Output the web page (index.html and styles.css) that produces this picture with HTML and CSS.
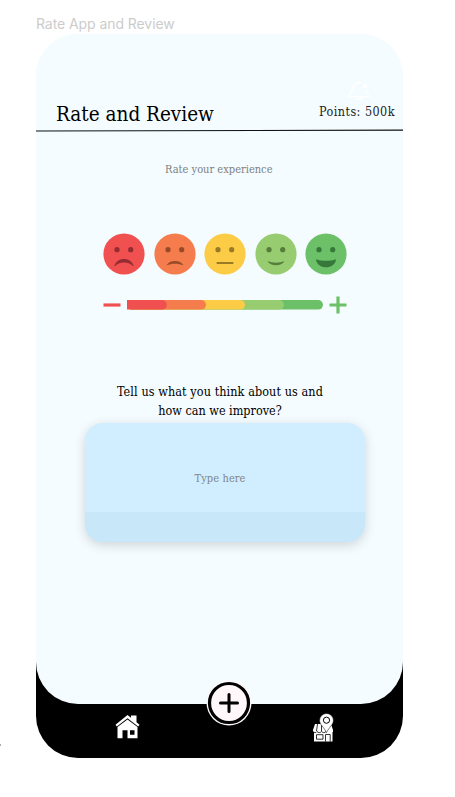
FILE: index.html
```html
<!DOCTYPE html>
<html lang="en">
<head>
<meta charset="utf-8">
<title>Rate App and Review</title>
<link rel="stylesheet" href="styles.css">
</head>
<body>
<div class="frame-label">Rate App and Review</div>
<main class="phone">
  <section class="screen">
    <header class="header">
      <h1 class="title"><span>Rate and Review</span></h1>
      <div class="account">
        <svg class="bell" viewBox="0 0 24 20" fill="none" stroke="#fff" stroke-width="1.300" stroke-linejoin="round" stroke-linecap="round"><path d="M14 2C9 1 6.200 4 5.300 8c-.6 3-1.300 5-3.800 7.700h21c-2-2-3-3.500-3.500-6M9 16c1 3.200 5.500 3.200 6.500 0"/><circle cx="18" cy="5" r="1.700" fill="#fff"/></svg>
        <span class="points">Points: 500k</span>
      </div>
    </header>
    <svg class="divider" viewBox="0 0 367 3"><path d="M0 2 367 1.200" stroke="#111" stroke-width="1.200"/></svg>
    <p class="prompt"><span>Rate your experience</span></p>
    <div class="faces">
      <svg viewBox="0 0 42 42"><circle cx="21" cy="21" r="20.600" fill="#f0504f"/><g fill="#942c32"><circle cx="14" cy="16.700" r="2.600"/><circle cx="27.700" cy="16.700" r="2.600"/><path d="M11.300 33.800C13 23.500 29 23.500 30.700 33.800 26 28 16 28 11.300 33.800Z"/></g></svg>
      <svg viewBox="0 0 42 42"><circle cx="21" cy="21" r="20.600" fill="#f57c4c"/><g fill="#984a28"><circle cx="14" cy="16.700" r="2.600"/><circle cx="27.700" cy="16.700" r="2.600"/><path d="M12.500 32.300C15.500 26.600 26.500 26.600 29.500 32.300 24 30.200 18 30.200 12.500 32.300Z"/></g></svg>
      <svg viewBox="0 0 42 42"><circle cx="21" cy="21" r="20.600" fill="#fdcc46"/><g fill="#9a7927"><circle cx="14" cy="16.700" r="2.600"/><circle cx="27.700" cy="16.700" r="2.600"/><rect x="12.500" y="29.100" width="17" height="1.900" rx=".8"/></g></svg>
      <svg viewBox="0 0 42 42"><circle cx="21" cy="21" r="20.600" fill="#97cc70"/><g fill="#557e3b"><circle cx="14" cy="16.700" r="2.600"/><circle cx="27.700" cy="16.700" r="2.600"/><path d="M12.500 28C18 30.200 24 30.200 29.500 28 26.500 33.800 15.500 33.800 12.500 28Z"/></g></svg>
      <svg viewBox="0 0 42 42"><circle cx="21" cy="21" r="20.600" fill="#6bc068"/><g fill="#35783a"><circle cx="14" cy="16.700" r="2.600"/><circle cx="27.700" cy="16.700" r="2.600"/><path d="M11 26.200C17 28.200 25 28.200 31 26.200 30 37 12 37 11 26.200Z"/></g></svg>
    </div>
    <div class="scale">
      <svg class="minus" viewBox="0 0 18 18"><path d="M.5 9h17" stroke="#f0504f" stroke-width="3.200"/></svg>
      <svg class="meter" viewBox="0 0 196 10"><rect width="196" height="9.600" rx="4.800" fill="#6bc068"/><rect width="157" height="9.600" rx="4.800" fill="#97cc70"/><rect width="118" height="9.600" rx="4.800" fill="#fdcc46"/><rect width="79" height="9.600" rx="4.800" fill="#f57c4c"/><path d="M0 0h35a4.800 4.800 0 0 1 0 9.600H0Z" fill="#f0504f"/></svg>
      <svg class="plus" viewBox="0 0 18 18"><path d="M.5 9h17M9 .5v17" stroke="#6bc068" stroke-width="3.200"/></svg>
    </div>
    <p class="question"><span class="q1">Tell us what you think about us and</span><br><span class="q2">how can we improve?</span></p>
    <div class="input"><span class="placeholder">Type here</span><div class="input-footer"></div></div>
  </section>
  <nav class="nav">
    <svg class="home" viewBox="0 0 25 24"><path fill="#fff" d="M12.500 0 16 2.800V.5h5.500v6.800l3 2.500-1.300 1.600L12.500 3.200 1.800 11.400.5 9.800Z"/><path fill="#fff" fill-rule="evenodd" d="M2.500 12 12.500 4.500 22.500 12V23.300H12.500v-8H7.500v8h-5ZM15 15.300v4.500h4.500v-4.500Z"/></svg>
    <svg class="store" viewBox="0 0 23 29"><path fill="#fff" d="M3 11h16l2 6v2H1v-2Z"/><path fill="#fff" d="M2 19h18.500v9.500H2Z"/><path fill="none" stroke="#000" stroke-width=".8" d="M5.500 11 4.500 18M9.500 11v7M1 18.500c1.500 1.500 3 1.500 4 0 1.500 1.500 3 1.500 4.500 0 1.500 1.500 3 1.500 4.500 0M4.500 21.700H11v4.500H4.500ZM13.500 28.500v-7h4.700v7"/><path fill="#fff" stroke="#000" stroke-width=".5" d="M14.500.5a6.900 6.900 0 0 0-6.900 6.900c0 4.300 4.300 6.600 6.900 12.200 2.600-5.600 6.900-7.900 6.900-12.200A6.900 6.900 0 0 0 14.500.5Z"/><circle cx="14.500" cy="7.200" r="3.100" fill="#fff" stroke="#000"/></svg>
  </nav>
  <svg class="add" viewBox="0 0 46 46"><circle cx="23" cy="23" r="22.500" fill="#fff7f9"/><circle cx="23" cy="23" r="19.500" fill="#fff7f9" stroke="#000" stroke-width="3.200"/><path d="M14.500 23h17M23 14.500v17" stroke="#000" stroke-width="3" stroke-linecap="round"/></svg>
</main>
<i class="canvas-mark"></i>
</body>
</html>
```
FILE: styles.css
```css
* { box-sizing: border-box; }
body { position: relative; margin: 0; height: 797px; overflow: hidden; background: #fff; font-family: "DejaVu Serif Condensed", "DejaVu Serif", serif; font-stretch: condensed; }
svg { display: block; flex: none; }
p, h1 { margin: 0; font-weight: 400; white-space: nowrap; }
.frame-label { height: 34px; padding: 14px 0 0 36px; font: 14px/20px Inter, sans-serif; letter-spacing: -.07px; color: #ccc; white-space: nowrap; }
.phone { position: relative; width: 367px; height: 723.5px; margin-left: 36px; background: linear-gradient(#f4fcff 50%, #000 50%); border-radius: 42px; }
.screen { height: 669.5px; display: flex; flex-direction: column; background: #f4fcff; border-radius: 42px; }
.header { height: 95px; display: flex; justify-content: space-between; padding: 0 8px 0 20px; }
.title { padding-top: 65px; font-size: 20.5px; line-height: 30px; }
.account { padding-top: 47px; }
.bell { width: 24px; height: 20px; margin-left: 28px; }
.points { display: block; font-size: 12.5px; line-height: 20px; letter-spacing: .46px; margin: 1px 0 0; white-space: nowrap; color: #222; }
.divider { width: 367px; height: 3px; }
.prompt { margin-top: 28px; padding-left: 129px; font-size: 11px; line-height: 20px; color: #7c8082; }
.faces { display: flex; gap: 8.5px; margin: 53px 0 0 67px; }
.faces svg { width: 42px; height: 42px; }
.scale { display: flex; align-items: center; margin: 20px 0 0 67px; height: 20px; }
.minus, .plus { width: 18px; height: 18px; }
.meter { width: 196px; height: 10px; margin: 0 6px 0 6px; }
.question { margin-top: 67px; padding-left: 1px; text-align: center; font-size: 12.5px; line-height: 19px; }
.q1 { letter-spacing: .09px; }
.input { width: 280px; height: 119px; margin: 3px 0 0 49px; display: flex; flex-direction: column; justify-content: space-between; background: #d0eeff; border-radius: 18px; box-shadow: 0 3px 12px rgba(0, 0, 0, .16); overflow: hidden; }
.placeholder { margin: 46px 0 0 109.5px; font-size: 11px; line-height: 20px; letter-spacing: .08px; color: #81878a; }
.input-footer { height: 30px; background: #c8e8f9; }
.nav { display: flex; justify-content: space-between; padding: 9px 68px 0 79px; }
.home { width: 25px; height: 24px; margin-top: 2.5px; }
.store { width: 23px; height: 29px; }
.add { position: absolute; left: 170px; top: 646px; width: 46px; height: 46px; }
.canvas-mark { position: absolute; left: 0; top: 744px; width: 1px; height: 2px; background: #aaa; }
```
